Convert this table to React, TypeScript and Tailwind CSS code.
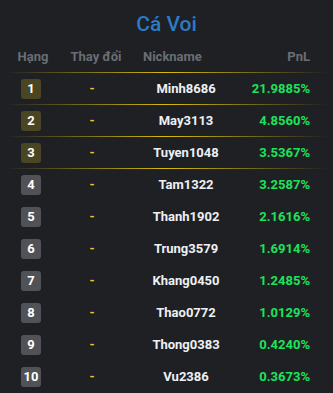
import React from "react";

const rows = [
  ["1", "Minh8686", "21.9885%"],
  ["2", "May3113", "4.8560%"],
  ["3", "Tuyen1048", "3.5367%"],
  ["4", "Tam1322", "3.2587%"],
  ["5", "Thanh1902", "2.1616%"],
  ["6", "Trung3579", "1.6914%"],
  ["7", "Khang0450", "1.2485%"],
  ["8", "Thao0772", "1.0129%"],
  ["9", "Thong0383", "0.4240%"],
  ["10", "Vu2386", "0.3673%"],
];

function Line() {
  return (
    <div className="mx-[5px] h-px bg-gradient-to-r from-transparent via-[#d4bc14] to-transparent" />
  );
}

export default function App() {
  return (
    <div
      className="w-[333px] h-[393px] bg-[#1e2024] overflow-hidden"
      style={{ fontFamily: "Roboto, 'Liberation Sans', sans-serif" }}
    >
      <div className="h-[41px] pt-[12px] text-center text-[21px] leading-[25px] font-medium text-[#2b7bc4]">
        Cá Voi
      </div>
      <div className="grid grid-cols-[62px_60px_128px_1fr] pr-[23px] h-[31px] items-center text-[13px] font-bold text-[#6a6e74]">
        <div className="text-center pl-[4px]">Hạng</div>
        <div className="text-center pl-[8px] whitespace-nowrap">Thay đổi</div>
        <div className="pl-[21px]">Nickname</div>
        <div className="text-right">PnL</div>
      </div>
      <Line />
      {rows.map(([rank, name, pnl], i) => (
        <div key={rank}>
          <div className="grid grid-cols-[62px_60px_128px_1fr] pr-[23px] h-[31px] items-center text-[13px] font-bold">
            <div className="flex justify-center">
              <div
                className={`w-[20px] h-[20px] rounded-[3px] flex items-center justify-center text-white ${
                  i < 3 ? "bg-[#4a4522]" : "bg-[#505257]"
                }`}
              >
                {rank}
              </div>
            </div>
            <div className="text-center text-[#e6cc2a]">-</div>
            <div className="text-center text-[#eef0f4]">{name}</div>
            <div className="text-right text-[#1de35a]">{pnl}</div>
          </div>
          {i < 3 ? <Line /> : <div className="h-px" />}
        </div>
      ))}
    </div>
  );
}
